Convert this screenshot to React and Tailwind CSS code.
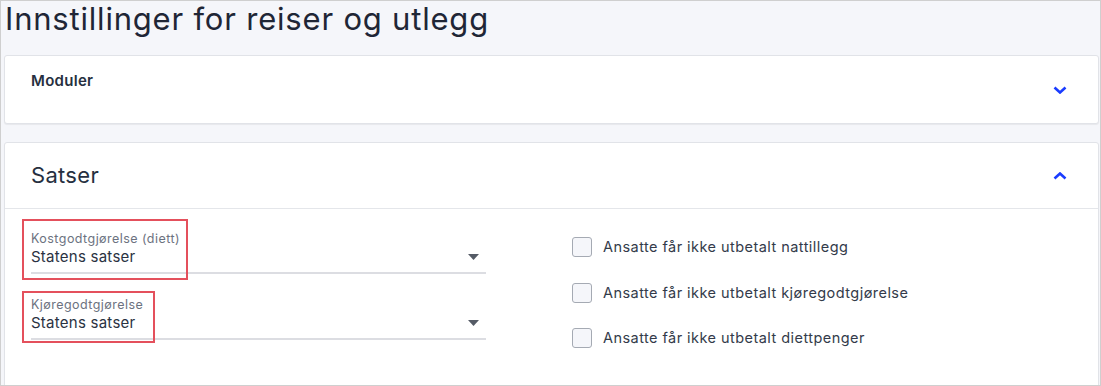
import React from 'react';

const font = { fontFamily: 'Inter, "Noto Sans", sans-serif' };

const Chevron = ({ up }) => (
  <svg width="14" height="8" viewBox="0 0 14 8" className="block">
    <polyline
      points={up ? '1.5,6.5 7,1.5 12.5,6.5' : '1.5,1.5 7,6.5 12.5,1.5'}
      fill="none"
      stroke="#1a3cff"
      strokeWidth="2.6"
      strokeLinejoin="miter"
    />
  </svg>
);

const Caret = () => (
  <svg width="11" height="6" viewBox="0 0 11 6" className="block">
    <polygon points="0,0 11,0 5.5,6" fill="#555b66" />
  </svg>
);

const SelectField = ({ label, value, box }) => (
  <div className="relative">
    <div className="text-[12.5px] leading-[16px] tracking-[0.45px] text-[#6c7280]">{label}</div>
    <div className="flex items-center justify-between pr-[7px] pb-[5px] border-b-2 border-[#dcdde2]">
      <span className="text-[15px] leading-[20px] tracking-[0.25px] text-[#2a3242]">{value}</span>
      <Caret />
    </div>
    {/* red highlight drawn over the field */}
    <div className={`absolute border-2 border-[#e4505c] pointer-events-none ${box}`} />
  </div>
);

const Check = ({ label }) => (
  <label className="flex items-center h-[20px] gap-[11px]">
    <span className="w-[20px] h-[20px] rounded-[3px] border-[1.5px] border-[#a5aab3] bg-[#f5f6fa]" />
    <span className="text-[14.5px] leading-[20px] tracking-[0.45px] text-[#333b4a]">{label}</span>
  </label>
);

export default function App() {
  return (
    <div style={font} className="w-[1101px] h-[386px] border border-[#cfcfcf] bg-[#f5f6fa] overflow-hidden">
      <h1 className="pl-[4px] text-[31px] leading-[36px] tracking-[0.8px] font-normal text-[#1f2636]">
        Innstillinger for reiser og utlegg
      </h1>

      <div className="mt-[18px] ml-[3px] w-[1095px] h-[69px] bg-white border border-[#e1e3e8] rounded-[3px] shadow-[0_1px_1px_rgba(0,0,0,0.06)] flex justify-between">
        <div className="pl-[26px] pt-[15px] text-[15px] leading-[20px] tracking-[0.3px] font-semibold text-[#262f40]">Moduler</div>
        <div className="self-center pr-[31px]">
          <Chevron />
        </div>
      </div>

      <div className="mt-[18px] ml-[3px] w-[1095px] bg-white border border-[#e1e3e8] rounded-[3px] shadow-[0_1px_1px_rgba(0,0,0,0.06)]">
        <div className="h-[66px] flex items-center justify-between border-b border-[#e4e6ea]">
          <h2 className="pl-[26px] pb-[2px] text-[22px] leading-[28px] tracking-[0.3px] font-normal text-[#262f40]">Satser</h2>
          <div className="pr-[31px]">
            <Chevron up />
          </div>
        </div>

        <div className="flex pl-[26px] pt-[22px] pb-[40px]">
          <div className="w-[455px] flex flex-col gap-[23px]">
            <SelectField
              label="Kostgodtgjørelse (diett)"
              value="Statens satser"
              box="-left-[9px] -top-[12px] w-[166px] h-[61px]"
            />
            <SelectField
              label="Kjøregodtgjørelse"
              value="Statens satser"
              box="-left-[9px] -top-[6px] w-[133px] h-[52px]"
            />
          </div>

          <div className="ml-[86px] pt-[6px] flex flex-col gap-[25.5px]">
            <Check label="Ansatte får ikke utbetalt nattillegg" />
            <Check label="Ansatte får ikke utbetalt kjøregodtgjørelse" />
            <Check label="Ansatte får ikke utbetalt diettpenger" />
          </div>
        </div>
      </div>
    </div>
  );
}
